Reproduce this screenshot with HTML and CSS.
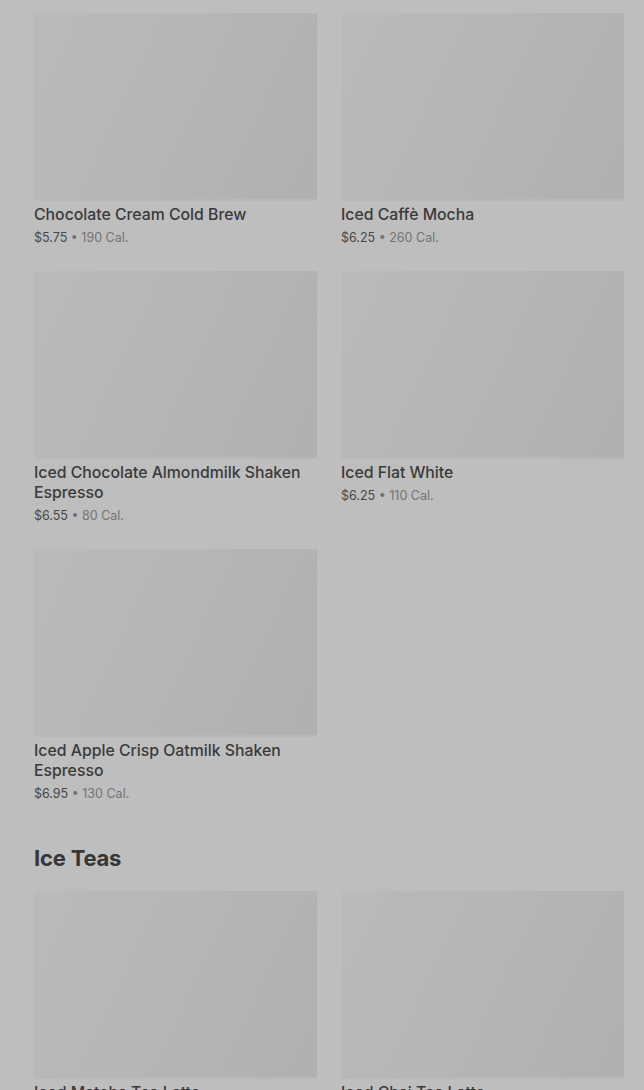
FILE: index.html
```html
<!DOCTYPE html>
<html lang="en">
<head>
    <meta charset="UTF-8">
    <title>Menu</title>
    <link rel="stylesheet" href="styles.css">
</head>
<body>
<div class="menu">
    <section class="menu-section">
        <div class="item-grid">
            <div class="item">
                <div class="item-img"></div>
                <div class="item-name">Chocolate Cream Cold Brew</div>
                <div class="item-meta"><span class="price">$5.75</span> • 190 Cal.</div>
            </div>
            <div class="item">
                <div class="item-img"></div>
                <div class="item-name">Iced Caffè Mocha</div>
                <div class="item-meta"><span class="price">$6.25</span> • 260 Cal.</div>
            </div>
            <div class="item">
                <div class="item-img"></div>
                <div class="item-name">Iced Chocolate Almondmilk Shaken Espresso</div>
                <div class="item-meta"><span class="price">$6.55</span> • 80 Cal.</div>
            </div>
            <div class="item">
                <div class="item-img"></div>
                <div class="item-name">Iced Flat White</div>
                <div class="item-meta"><span class="price">$6.25</span> • 110 Cal.</div>
            </div>
            <div class="item">
                <div class="item-img"></div>
                <div class="item-name">Iced Apple Crisp Oatmilk Shaken Espresso</div>
                <div class="item-meta"><span class="price">$6.95</span> • 130 Cal.</div>
            </div>
        </div>
    </section>

    <section class="menu-section">
        <h2 class="section-title">Ice Teas</h2>
        <div class="item-grid">
            <div class="item">
                <div class="item-img"></div>
                <div class="item-name">Iced Matcha Tea Latte</div>
                <div class="item-meta"><span class="price">$5.45</span> • 200 Cal.</div>
            </div>
            <div class="item">
                <div class="item-img"></div>
                <div class="item-name">Iced Chai Tea Latte</div>
                <div class="item-meta"><span class="price">$5.45</span> • 240 Cal.</div>
            </div>
        </div>
    </section>
</div>
</body>
</html>
```

FILE: styles.css
```css
html, body { margin: 0; }
body { font-family: Inter, "Noto Sans", sans-serif; background: #bebebe; color: #3a3a3a; overflow: hidden; height: 1090px; }
.menu { padding: 13px 20px 0 34px; }
.menu-section { margin-bottom: 41px; }
.section-title { font-size: 22px; line-height: 28px; font-weight: 700; color: #363636; margin: 0 0 19px; letter-spacing: -0.2px; }
.item-grid { display: grid; grid-template-columns: 1fr 1fr; column-gap: 24px; row-gap: 24px; align-items: start; }
.item-img { height: 188px; background: linear-gradient(115deg, #bababa 0%, #b6b6b6 45%, #b0b0b0 100%); box-shadow: inset 0 -2px 0 #b8b8b8; }
.item-name { margin-top: 4px; font-size: 15.8px; line-height: 20px; font-weight: 500; color: #3a3a3a; }
.item-meta { margin-top: 4px; font-size: 12.5px; line-height: 18px; color: #737373; }
.price { color: #474747; }
```
